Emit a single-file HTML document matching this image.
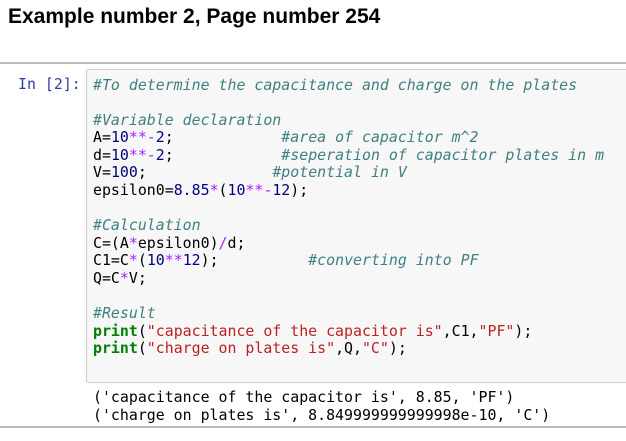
<!DOCTYPE html>
<html><head><style>
body{margin:0;width:626px;height:441px;background:#fff;overflow:hidden;position:relative;font-family:"DejaVu Sans Mono",monospace}
h1{position:absolute;left:8px;top:5px;margin:0;font:bold 21px "Liberation Sans",sans-serif;color:#000}
.hr{position:absolute;left:0;width:626px;height:2px;background:#bbb}
.prompt{position:absolute;left:18px;top:76px;font-size:14.9px;line-height:17.6px;color:#303F9F}
.box{position:absolute;left:86px;top:69px;width:600px;height:312px;background:#f7f7f7;border:1px solid #cfcfcf;border-radius:2px}
pre{margin:0;font-family:"DejaVu Sans Mono",monospace;font-size:14.9px;line-height:17.6px;position:absolute}
.c{color:#408080;font-style:italic}.n{color:#000080}.o{color:#AA22FF}.k{color:#008000;font-weight:bold}.s{color:#BA2121}
</style></head><body>
<h1>Example number 2, Page number 254</h1>
<div class="hr" style="top:62px"></div>
<div class="prompt">In [2]:</div>
<div class="box"></div>
<pre style="left:93px;top:76.5px"><span class="c">#To determine the capacitance and charge on the plates</span>

<span class="c">#Variable declaration</span>
A=<span class="n">10</span><span class="o">**-</span><span class="n">2</span>;            <span class="c">#area of capacitor m^2</span>
d=<span class="n">10</span><span class="o">**-</span><span class="n">2</span>;            <span class="c">#seperation of capacitor plates in m</span>
V=<span class="n">100</span>;              <span class="c">#potential in V</span>
epsilon0=<span class="n">8.85</span><span class="o">*</span>(<span class="n">10</span><span class="o">**-</span><span class="n">12</span>);

<span class="c">#Calculation</span>
C=(A<span class="o">*</span>epsilon0)<span class="o">/</span>d;
C1=C<span class="o">*</span>(<span class="n">10</span><span class="o">**</span><span class="n">12</span>);          <span class="c">#converting into PF</span>
Q=C<span class="o">*</span>V;

<span class="c">#Result</span>
<span class="k">print</span>(<span class="s">"capacitance of the capacitor is"</span>,C1,<span class="s">"PF"</span>);
<span class="k">print</span>(<span class="s">"charge on plates is"</span>,Q,<span class="s">"C"</span>);</pre>
<pre style="left:93px;top:389px">('capacitance of the capacitor is', 8.85, 'PF')
('charge on plates is', 8.849999999999998e-10, 'C')</pre>
<div class="hr" style="top:426px"></div>
</body></html>
